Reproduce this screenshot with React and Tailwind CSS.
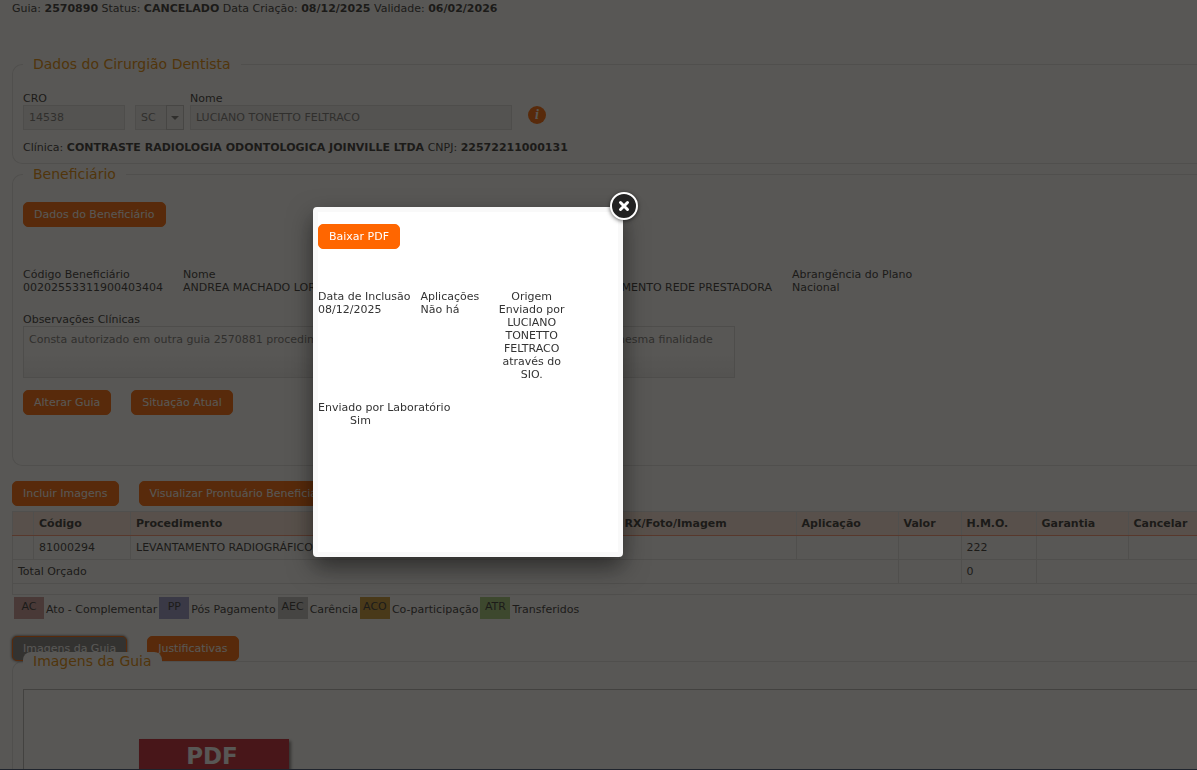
import React, { useState } from 'react';
import { clsx } from 'clsx';

const legendItems = [
    { code: 'AC', label: 'Ato - Complementar', color: 'bg-[#cc9999]' },
    { code: 'PP', label: 'Pós Pagamento', color: 'bg-[#9999cc]' },
    { code: 'AEC', label: 'Carência', color: 'bg-[#c0c0c0]' },
    { code: 'ACO', label: 'Co-participação', color: 'bg-[#cc9933]' },
    { code: 'ATR', label: 'Transferidos', color: 'bg-[#a3cc7a]' },
];

const columns = ['', 'Código', 'Procedimento', 'RX/Foto/Imagem', 'Aplicação', 'Valor', 'H.M.O.', 'Garantia', 'Cancelar'];

function Button({ children, active, className, ...props }) {
    return (
        <button
            type="button"
            className={clsx(
                'h-[25px] px-[10px] border border-[#ff6600] rounded-[5px] text-white whitespace-nowrap',
                active ? 'bg-[#808080] shadow-[0_0_3px_#333333]' : 'bg-[#ff6600]',
                className
            )}
            {...props}
        >
            {children}
        </button>
    );
}

function Panel({ title, className, children }) {
    return (
        <fieldset className={clsx('min-w-0 border border-r-0 border-[#e2e2e2] rounded-l-[10px] pl-[10px]', className)}>
            <legend className="relative bg-white rounded-t-[8px] px-[10px] text-sm leading-[19px] text-[#e68a00]">{title}</legend>
            {children}
        </fieldset>
    );
}

function CloseIcon() {
    return (
        <svg width="28" height="28" viewBox="0 0 28 28" aria-hidden="true">
            <circle cx="14" cy="14" r="13" fill="#222" stroke="#fff" strokeWidth="2" />
            <path d="M10.5 10.5l7 7M17.5 10.5l-7 7" stroke="#fff" strokeWidth="3" strokeLinecap="round" />
        </svg>
    );
}

function ProceduresTable() {
    const cell = 'border border-[#e2e2e2] px-[5px] h-6 text-left';
    return (
        <table className="mt-[5px] w-full table-fixed border-collapse">
            <colgroup>
                <col className="w-[21px]" />
                <col className="w-[97px]" />
                <col />
                <col className="w-[177px]" />
                <col className="w-[102px]" />
                <col className="w-[63px]" />
                <col className="w-[75px]" />
                <col className="w-[92px]" />
                <col className="w-[69px]" />
            </colgroup>
            <thead>
                <tr className="bg-[#ffe8db]">
                    {columns.map((c) => (
                        <th key={c} className={clsx(cell, 'border-b-[#ff9471] last:border-r-0')}>{c}</th>
                    ))}
                </tr>
            </thead>
            <tbody>
                <tr>
                    <td className={cell}></td>
                    <td className={cell}>81000294</td>
                    <td className={cell}>LEVANTAMENTO RADIOGRÁFICO</td>
                    <td className={cell}></td>
                    <td className={cell}></td>
                    <td className={cell}></td>
                    <td className={cell}>222</td>
                    <td className={cell}></td>
                    <td className={clsx(cell, 'border-r-0')}></td>
                </tr>
                <tr>
                    <td className={cell} colSpan={5}>Total Orçado</td>
                    <td className={cell}></td>
                    <td className={cell}>0</td>
                    <td className={clsx(cell, 'border-r-0')} colSpan={2}></td>
                </tr>
                <tr>
                    <td className="h-[11px] border border-r-0 border-[#e2e2e2]" colSpan={9}></td>
                </tr>
            </tbody>
        </table>
    );
}

function ImageModal({ onClose }) {
    return (
        <div className="fixed inset-0 bg-[#14120f]/71">
            <div
                role="dialog"
                aria-label="Imagem"
                className="absolute left-[313px] top-[207px] w-[310px] min-h-[350px] rounded-[4px] border-5 border-[#f9f9f9] bg-white shadow-[0_10px_25px_rgba(0,0,0,0.5)]"
            >
                <button type="button" onClick={onClose} aria-label="Fechar" className="absolute -top-5 -right-5 drop-shadow-[0_1px_2px_rgba(0,0,0,0.6)]">
                    <CloseIcon />
                </button>
                <Button className="mt-3">Baixar PDF</Button>
                <div className="mt-[41px] flex gap-[10px]">
                    <div>
                        <div>Data de Inclusão</div>
                        <div>08/12/2025</div>
                    </div>
                    <div>
                        <div>Aplicações</div>
                        <div>Não há</div>
                    </div>
                    <div className="w-[85px] px-1 text-center">
                        <div>Origem</div>
                        <div>Enviado por LUCIANO TONETTO FELTRACO através do SIO.</div>
                    </div>
                </div>
                <div className="mt-5 w-[85px] text-center whitespace-nowrap">
                    <div>Enviado por Laboratório</div>
                    <div>Sim</div>
                </div>
            </div>
        </div>
    );
}

export default function App() {
    const [open, setOpen] = useState(true);

    return (
        <div className="h-screen overflow-hidden bg-white pl-3 pt-[2px] font-['DejaVu_Sans',Verdana,sans-serif] text-[11px] leading-[13px] text-[#333333]">
            <p>
                Guia: <b>2570890</b> Status: <b>CANCELADO</b> Data Criação: <b>08/12/2025</b> Validade: <b>06/02/2026</b>
            </p>

            {/* Dentist */}
            <Panel title="Dados do Cirurgião Dentista" className="mt-10 pt-[18px] pb-[9px]">
                <div className="flex items-end">
                    <div className="flex flex-col w-[102px]">
                        <label htmlFor="cro">CRO</label>
                        <input id="cro" disabled defaultValue="14538" className="h-[25px] px-[5px] border border-[#dddddd] bg-[#f0f0f0] text-[#777777]" />
                    </div>
                    <div className="relative ml-[10px] w-[49px]">
                        <select disabled aria-label="UF" className="block appearance-none w-full h-[25px] px-[5px] border border-[#dddddd] bg-[#f0f0f0] text-[#777777] opacity-100">
                            <option>SC</option>
                        </select>
                        <span className="absolute right-0 top-0 flex items-center justify-center w-[18px] h-[25px] border border-[#c5c5c5] bg-[#f5f5f5] pointer-events-none">
                            <svg width="8" height="4" viewBox="0 0 8 4"><path d="M0 0h8L4 4z" fill="#777" /></svg>
                        </span>
                    </div>
                    <div className="flex flex-col ml-[6px] w-[322px]">
                        <label htmlFor="nome">Nome</label>
                        <input id="nome" disabled defaultValue="LUCIANO TONETTO FELTRACO" className="h-[25px] px-[5px] border border-[#dddddd] bg-[#f0f0f0] text-[#777777]" />
                    </div>
                    <button
                        type="button"
                        aria-label="Informações"
                        className="ml-4 mb-[6px] size-[18px] rounded-full bg-[#ff6600] font-['Liberation_Serif',serif] text-sm leading-[18px] font-bold italic text-white"
                    >
                        i
                    </button>
                </div>
                <p className="mt-[11px]">
                    Clínica: <b>CONTRASTE RADIOLOGIA ODONTOLOGICA JOINVILLE LTDA</b> CNPJ: <b>22572211000131</b>
                </p>
            </Panel>

            {/* Beneficiary */}
            <Panel title="Beneficiário" className="mt-px pt-[18px] pb-[50px]">
                <Button>Dados do Beneficiário</Button>
                <div className="mt-[41px] flex gap-5 whitespace-nowrap">
                    <div className="w-[140px]">
                        <div>Código Beneficiário</div>
                        <div>00202553311900403404</div>
                    </div>
                    <div className="w-[300px]">
                        <div>Nome</div>
                        <div>ANDREA MACHADO LOR</div>
                    </div>
                    <div className="w-[269px]">
                        <div>Plano</div>
                        <div className="text-right">ATENDIMENTO REDE PRESTADORA</div>
                    </div>
                    <div>
                        <div>Abrangência do Plano</div>
                        <div>Nacional</div>
                    </div>
                </div>
                <div className="mt-[19px] flex flex-col">
                    <label htmlFor="obs">Observações Clínicas</label>
                    <textarea
                        id="obs"
                        disabled
                        defaultValue="Consta autorizado em outra guia 2570881 procedimento 81000294, já foi realizado anteriormente para a mesma finalidade"
                        className="w-[712px] h-[52px] px-[5px] py-[6px] resize-none overflow-hidden border border-[#dddddd] bg-linear-to-b from-white from-50% to-[#f0f0f0] text-[#777777]"
                    />
                </div>
                <div className="mt-3 flex gap-5">
                    <Button>Alterar Guia</Button>
                    <Button>Situação Atual</Button>
                </div>
            </Panel>

            <div className="mt-[15px] flex gap-5">
                <Button>Incluir Imagens</Button>
                <Button>Visualizar Prontuário Beneficiário</Button>
            </div>

            <ProceduresTable />

            <div className="mt-[2px] ml-[2px] flex gap-[2px]">
                {legendItems.map((item) => (
                    <div key={item.code} className="flex gap-[2px]">
                        <span className={clsx('w-[30px] h-[22px] pt-[3px] text-center', item.color)}>{item.code}</span>
                        <span className="pt-[6px]">{item.label}</span>
                    </div>
                ))}
            </div>

            {/* Tabs */}
            <div className="mt-[17px] flex gap-5">
                <Button active>Imagens da Guia</Button>
                <Button>Justificativas</Button>
            </div>
            <Panel title="Imagens da Guia" className="-mt-[9px] pt-[18px]">
                <div className="h-40 border border-r-0 border-[#b5b5b5] pt-[49px] pl-[115px]">
                    <div className="w-[150px] h-24 pt-[3px] pr-1 bg-[#c82030] text-center text-[23px] leading-[28px] font-bold text-white shadow-[2px_2px_3px_rgba(0,0,0,0.5)]">
                        PDF
                    </div>
                </div>
            </Panel>

            {open && <ImageModal onClose={() => setOpen(false)} />}
            <div className="fixed bottom-0 inset-x-0 h-px bg-[#1f242d]"></div>
        </div>
    );
}
